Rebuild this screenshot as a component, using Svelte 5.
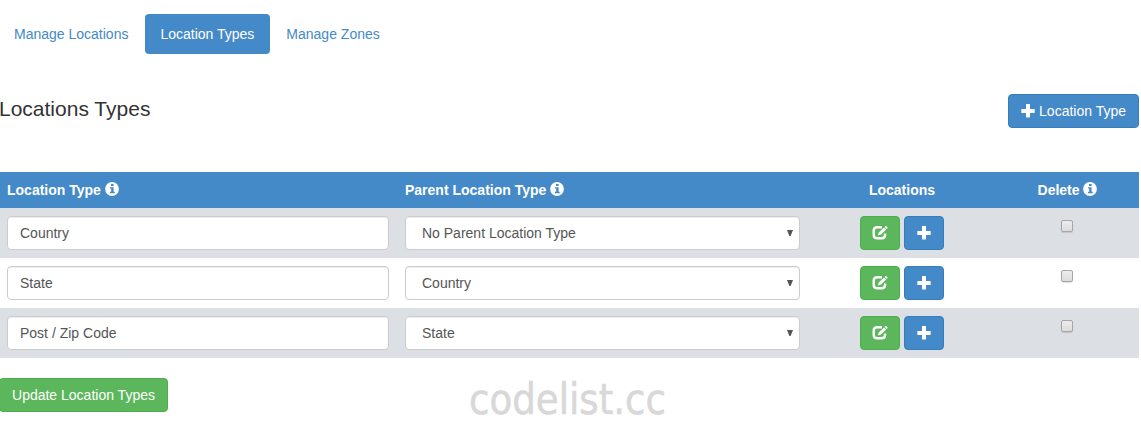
<script>
  const tabs = ['Manage Locations', 'Location Types', 'Manage Zones'];
  const active = 'Location Types';
  const rows = [
    { name: 'Country', parent: 'No Parent Location Type' },
    { name: 'State', parent: 'Country' },
    { name: 'Post / Zip Code', parent: 'State' }
  ];
</script>

{#snippet plus()}
  <svg class="icon" viewBox="0 0 14 14" aria-hidden="true">
    <path fill="#fff" d="M5.4 0h3.2q.4 0 .4.4V5h4.3q.4 0 .4.4v3.2q0 .4-.4.4H9v4.1q0 .4-.4.4H5.4q-.4 0-.4-.4V9H.7q-.4 0-.4-.4V5.4Q.3 5 .7 5H5V.4q0-.4.4-.4z" />
  </svg>
{/snippet}

{#snippet edit()}
  <svg class="icon edit" viewBox="0 0 16 14" aria-hidden="true">
    <path fill="none" stroke="#fff" stroke-width="2.4" d="M10 1.3H5.2Q1.7 1.3 1.7 4.8v4q0 3.5 3.5 3.5h4.4q3.5 0 3.5-3.5V7.4" />
    <path fill="#fff" d="M5.9 9.6l.8-3L12 1.5l2.1 2.1-5 5zM12.6.9l.8-.8q.4-.3.8 0l1.3 1.3q.3.4 0 .8l-.8.8z" />
  </svg>
{/snippet}

{#snippet info()}
  <svg class="icon info" viewBox="0 0 14 14" aria-hidden="true">
    <circle cx="7" cy="7" r="6.9" fill="#fff" />
    <path fill="#4489c8" d="M6 2h2.6v2H6zM5 5.2h3.6v4.6h1.1v1.4H5V9.8h1.2V6.6H5z" />
  </svg>
{/snippet}

<main>
  <nav>
    {#each tabs as tab}
      <a href="#top" class:active={tab === active}>{tab}</a>
    {/each}
  </nav>

  <header>
    <h3>Locations Types</h3>
    <button class="btn blue">{@render plus()} Location Type</button>
  </header>

  <section class="table">
    <div class="row head">
      <div>Location Type {@render info()}</div>
      <div>Parent Location Type {@render info()}</div>
      <div class="center">Locations</div>
      <div class="center">Delete {@render info()}</div>
    </div>
    {#each rows as row}
      <div class="row body">
        <div><input class="control" type="text" value={row.name} /></div>
        <div>
          <div class="control select" role="combobox" aria-expanded="false" aria-controls="none" tabindex="0">
            <span>{row.parent}</span>
            <svg class="arrow" viewBox="0 0 6 6" aria-hidden="true"><path d="M0 0h6L3.6 6H2.4z" fill="#555" /></svg>
          </div>
        </div>
        <div class="actions">
          <button class="btn green square" aria-label="Edit">{@render edit()}</button>
          <button class="btn blue square" aria-label="Add">{@render plus()}</button>
        </div>
        <div class="check"><input type="checkbox" aria-label="Delete" /></div>
      </div>
    {/each}
  </section>

  <footer>
    <button class="btn green update">Update Location Types</button>
    <svg class="mark" width="200" height="50" viewBox="0 0 200 50">
      <text x="0" y="35.5" textLength="197" lengthAdjust="spacingAndGlyphs">codelist.cc</text>
    </svg>
  </footer>
</main>

<style>
  :global(body) {
    background: #fff;
    overflow: hidden;
  }
  main {
    width: 1139px;
    height: 428px;
    box-sizing: border-box;
    padding-top: 14px;
    overflow: hidden;
    font: 14px/20px "Liberation Sans", Arial, sans-serif;
    color: #333;
  }
  nav {
    display: flex;
    gap: 2px;
    margin-left: -1px;
  }
  nav a {
    padding: 10px 15px;
    border-radius: 4px;
    color: #4489c8;
    text-decoration: none;
  }
  nav a.active {
    padding-right: 16px;
    margin-right: -1px;
    background: #4489c8;
    color: #fff;
  }
  header {
    display: flex;
    justify-content: space-between;
    margin-top: 40px;
    height: 78px;
  }
  h3 {
    margin: 3px 0 0 -1px;
    font-size: 21px;
    line-height: 24px;
    font-weight: 400;
  }
  .btn {
    height: 34px;
    box-sizing: border-box;
    padding: 0 12px;
    border: 1px solid;
    border-radius: 4px;
    font: inherit;
    color: #fff;
    white-space: nowrap;
  }
  .blue {
    background: #4489c8;
    border-color: #357ebd;
  }
  .green {
    background: #5cb65c;
    border-color: #4cae4c;
  }
  .square {
    width: 40px;
    padding: 0;
    display: flex;
    align-items: center;
    justify-content: center;
  }
  .icon {
    width: 14px;
    height: 14px;
    vertical-align: -2px;
    flex: none;
  }
  .info {
    vertical-align: -1px;
  }
  .edit {
    width: 16px;
  }
  .row {
    display: grid;
    grid-template-columns: 398px 410px 188px 143px;
  }
  .row > div {
    padding: 8px 8px 8px 7px;
  }
  .head {
    background: #4489c8;
    color: #fff;
    font-weight: 700;
    height: 36px;
  }
  .row > .center {
    padding-right: 7px;
    text-align: center;
  }
  .body {
    height: 50px;
  }
  .body:nth-child(even) {
    background: #dcdfe4;
  }
  .control {
    display: block;
    width: 100%;
    height: 34px;
    box-sizing: border-box;
    padding: 6px 12px;
    border: 1px solid #ccc;
    border-radius: 4px;
    background: #fff;
    box-shadow: inset 0 1px 1px rgba(0, 0, 0, 0.075);
    font: inherit;
    color: #555;
  }
  .row > div:first-child {
    padding-right: 9px;
  }
  .select {
    display: flex;
    align-items: center;
    justify-content: space-between;
    padding: 6px 6px 6px 16px;
  }
  .arrow {
    width: 6px;
    height: 6px;
  }
  .row > .actions {
    display: flex;
    justify-content: center;
    gap: 4px;
  }
  .row > .check {
    display: flex;
    justify-content: center;
    padding-top: 12px;
  }
  .check input {
    appearance: none;
    width: 12px;
    height: 12px;
    margin: 0;
    box-sizing: border-box;
    border: 1px solid #a6a6a6;
    border-radius: 2px;
    background: linear-gradient(#ededed, #dcdcdc);
    box-shadow: 0 1px 1px rgba(0, 0, 0, 0.12);
  }
  footer {
    display: flex;
    align-items: flex-start;
    padding-top: 20px;
  }
  .update {
    width: 169px;
    margin-left: -1px;
  }
  .mark {
    margin-left: 301px;
    overflow: visible;
  }
  .mark text {
    font: 43px "DejaVu Sans", sans-serif;
    fill: #d8d8d8;
    stroke: #d8d8d8;
    stroke-width: 0.6px;
  }
</style>
